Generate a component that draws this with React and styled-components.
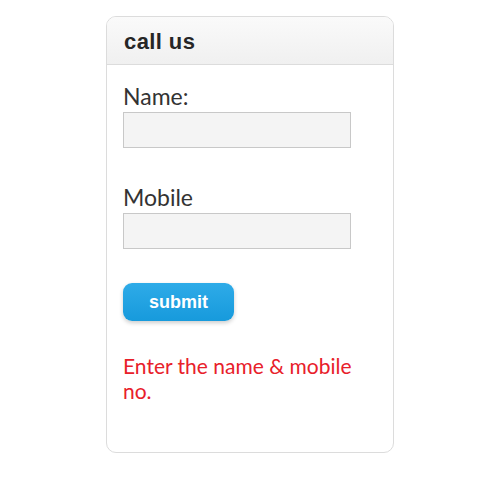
import React from 'react';
import styled, { createGlobalStyle } from 'styled-components';

const GlobalStyle = createGlobalStyle`
  html, body {
    margin: 0;
    padding: 0;
    background: #fff;
  }
  body {
    width: 500px;
    height: 500px;
  }
`;

const App = () => {
  return (
    <Page>
      <GlobalStyle />
      <Card>
        <Header>
          <Title>call us</Title>
        </Header>
        <Body>
          <Field>
            <Label>Name:</Label>
            <Input type="text" />
          </Field>
          <Field>
            <Label>Mobile</Label>
            <Input type="text" />
          </Field>
          <SubmitButton type="button">submit</SubmitButton>
          <Message>Enter the name &amp; mobile no.</Message>
        </Body>
      </Card>
    </Page>
  );
};
export default App;

const Page = styled.div`
  display: flex;
  justify-content: center;
  padding-top: 16px;
`;

const Card = styled.div`
  width: 288px;
  height: 437px;
  border: 1px solid #dcdcdc;
  border-radius: 10px;
  box-sizing: border-box;
  overflow: hidden;
  background: #fff;
`;

const Header = styled.div`
  height: 48px;
  box-sizing: border-box;
  padding: 0 17px;
  display: flex;
  align-items: center;
  background: linear-gradient(to bottom, #fafafa, #f0f0f0);
  border-bottom: 1px solid #dcdcdc;
`;

const Title = styled.h3`
  margin: 2px 0 0 0;
  font-family: 'Liberation Sans', Arial, sans-serif;
  font-weight: bold;
  font-size: 22px;
  letter-spacing: 0.4px;
  color: #262626;
`;

const Body = styled.div`
  padding: 18px 16px 0 16px;
  display: flex;
  flex-direction: column;
  align-items: flex-start;
`;

const Field = styled.div`
  display: flex;
  flex-direction: column;
  margin-bottom: 36px;
`;

const Label = styled.label`
  font-family: Lato, 'Open Sans', sans-serif;
  font-size: 23px;
  line-height: 26px;
  color: #333;
  margin-bottom: 3px;
`;

const Input = styled.input`
  width: 228px;
  height: 36px;
  box-sizing: border-box;
  border: 1px solid #c8c8c8;
  background: #f4f4f4;
  outline: none;
  padding: 0 6px;
  margin: 0;
`;

const SubmitButton = styled.button`
  width: 111px;
  height: 38px;
  border: none;
  border-radius: 9px;
  background: linear-gradient(to bottom, #2eabe8, #179adc);
  box-shadow: 0 2px 4px rgba(0, 0, 0, 0.2);
  color: #fff;
  font-family: 'Liberation Sans', Arial, sans-serif;
  font-weight: bold;
  font-size: 18px;
  cursor: pointer;
  margin-top: -2px;
`;

const Message = styled.p`
  margin: 32px 0 0 0;
  width: 240px;
  font-family: Lato, 'Open Sans', sans-serif;
  font-size: 21px;
  line-height: 25px;
  color: #e8202a;
`;
